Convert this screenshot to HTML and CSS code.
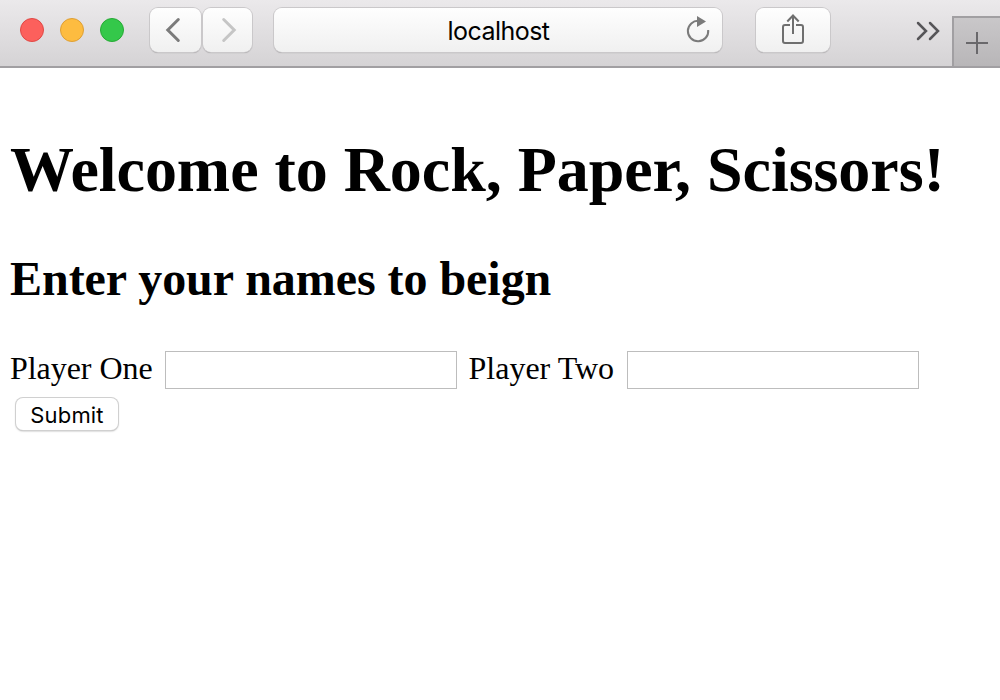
FILE: index.html
```html
<!DOCTYPE html>
<html lang="en">
<head>
<meta charset="utf-8">
<title>Rock, Paper, Scissors</title>
<link rel="stylesheet" href="styles.css">
</head>
<body>
<header class="toolbar">
  <div class="lights">
    <span class="light red"></span>
    <span class="light yellow"></span>
    <span class="light green"></span>
  </div>
  <div class="nav">
    <div class="tool back"><svg width="51" height="44" viewBox="0 0 51 44" fill="none" stroke="#7b7b7b" stroke-width="3" stroke-linecap="round"><path d="M28.300 11.500 17.800 22l10.500 10.500"/></svg></div>
    <div class="tool forward"><svg width="49" height="44" viewBox="0 0 49 44" fill="none" stroke="#c5c5c5" stroke-width="3" stroke-linecap="round"><path d="M20.700 11.500 31.200 22 20.700 32.500"/></svg></div>
  </div>
  <div class="tool address">
    <span class="host">localhost</span>
    <svg class="reload" width="24" height="28" viewBox="0 0 24 28"><path d="M13 4.900A10.200 10.200 0 1 0 22.200 14" fill="none" stroke="#7b7b7b" stroke-width="2"/><path d="M11 0v11l9-5.500z" fill="#7b7b7b"/></svg>
  </div>
  <div class="tool share"><svg width="74" height="44" viewBox="0 0 74 44" fill="none" stroke="#6f6f6f" stroke-width="2"><path d="M34 17h-5q-2 0-2 2v14q0 2 2 2h16q2 0 2-2V19q0-2-2-2h-5M37 26V8M31.300 13.500 37 7.500l5.700 6"/></svg></div>
  <svg class="more" width="24" height="20" viewBox="0 0 24 20" fill="none" stroke="#565558" stroke-width="2.500" stroke-linecap="round"><path d="m2 2 8 8-8 8M14 2l8 8-8 8"/></svg>
  <div class="newtab"><svg width="46" height="50" viewBox="0 0 46 50" fill="none" stroke="#69686b" stroke-width="2"><path d="M12 25h22M23 14v22"/></svg></div>
</header>
<main class="page">
  <h1 class="title">Welcome to Rock, Paper, Scissors!</h1>
  <h2 class="subtitle">Enter your names to beign</h2>
  <form class="form">
    <div class="fields">
      <label class="label one" for="p1">Player One</label>
      <input class="field" id="p1" type="text">
      <label class="label two" for="p2">Player Two</label>
      <input class="field" id="p2" type="text">
    </div>
    <button class="submit" type="button">Submit</button>
  </form>
</main>
</body>
</html>
```
FILE: styles.css
```css
* { box-sizing: border-box; }
body { margin: 0; min-height: 100vh; background: #fff; color: #000; font-family: "Liberation Serif", "Times New Roman", serif; }
svg { display: block; flex: none; }
.toolbar { display: flex; align-items: flex-start; height: 68px; padding-left: 20px; background: linear-gradient(#ebe9eb, #d5d3d5); border-bottom: 2px solid #a19fa2; }
.lights { display: flex; gap: 16px; width: 130px; padding-top: 18px; }
.light { width: 24px; height: 24px; border-radius: 50%; border: 1px solid; }
.red { background: #fc605c; border-color: #e04845; }
.yellow { background: #fdbc40; border-color: #de9f34; }
.green { background: #34c84a; border-color: #27aa35; }
.nav { display: flex; gap: 2px; margin-top: 8px; width: 102px; }
.tool { height: 44px; border-radius: 8px; background: linear-gradient(#fefefe, #f0f0f0); box-shadow: 0 0 0 1px #cac8ca, 0 1px 1px #8e8c8e; }
.back { width: 51px; }
.forward { width: 49px; }
.address { display: grid; grid-template-columns: 1fr auto 1fr; align-items: start; width: 448px; margin: 8px 0 0 22px; }
.host { grid-column: 2; font: 25px/30px Inter, sans-serif; letter-spacing: -0.55px; padding: 8px 0 0 1px; }
.reload { justify-self: end; margin: 8px 12px 0 0; }
.share { width: 74px; margin: 8px 0 0 34px; }
.more { margin: 21px 0 0 86px; }
.newtab { width: 48px; height: 50px; margin: 16px 0 0 auto; border: solid #a19fa2; border-width: 2px 0 0 2px; background: linear-gradient(#c9c7c9, #b8b6b8); }
.page { padding: 65px 10px 10px; }
.title { margin: 0; font-size: 64px; line-height: 74px; letter-spacing: -0.04px; white-space: nowrap; }
.subtitle { margin: 44px 0 0; font-size: 48px; line-height: 56px; letter-spacing: -0.04px; }
.form { margin-top: 43px; }
.fields { display: flex; align-items: flex-start; font-size: 32px; line-height: 36px; }
.label { height: 38px; white-space: nowrap; }
.one { width: 155px; letter-spacing: -0.05px; }
.two { width: 158.500px; margin-left: 11.500px; }
.field { width: 292px; height: 38px; margin: 1px 0 0; padding: 4px; border: 1px solid #bdbdbd; border-radius: 0; outline: 0; font: 24px Inter, sans-serif; }
.submit { display: block; width: 102px; height: 32px; margin: 9px 0 0 6px; padding: 0; border: 0; border-radius: 7px; background: #fff; box-shadow: 0 0 0 1px #d0d0d0, 0 1px 2px #999; color: #000; font: 22px/34px Inter, sans-serif; letter-spacing: 0.15px; }
```
